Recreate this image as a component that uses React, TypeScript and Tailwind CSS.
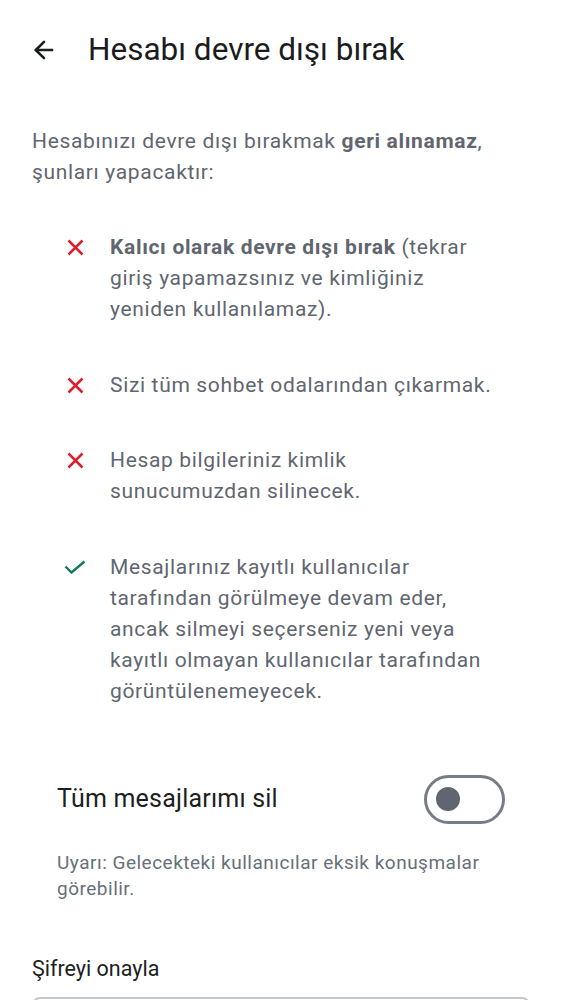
import { ArrowLeft } from 'lucide-react'

const items: { ok: boolean; body: React.ReactNode }[] = [
  {
    ok: false,
    body: (
      <>
        <span className="font-bold">Kalıcı olarak devre dışı bırak</span> (tekrar giriş yapamazsınız ve
        kimliğiniz yeniden kullanılamaz).
      </>
    ),
  },
  { ok: false, body: 'Sizi tüm sohbet odalarından çıkarmak.' },
  { ok: false, body: 'Hesap bilgileriniz kimlik sunucumuzdan silinecek.' },
  {
    ok: true,
    body: 'Mesajlarınız kayıtlı kullanıcılar tarafından görülmeye devam eder, ancak silmeyi seçerseniz yeni veya kayıtlı olmayan kullanıcılar tarafından görüntülenemeyecek.',
  },
]

function CrossIcon() {
  return (
    <svg width="17" height="17" viewBox="0 0 17 17" fill="none">
      <path d="M1.5 1.5L15.5 15.5M15.5 1.5L1.5 15.5" stroke="#dc1f2e" strokeWidth="2.5" />
    </svg>
  )
}

function CheckIcon() {
  return (
    <svg width="22" height="14" viewBox="0 0 22 14" fill="none">
      <path d="M1.5 6.5L7.5 12.5L20.5 1.5" stroke="#0f7a5c" strokeWidth="2.4" />
    </svg>
  )
}

export default function App() {
  return (
    <div className="min-h-screen bg-white px-8 font-['Roboto',sans-serif]">
      <header className="flex h-[99px] items-center">
        <ArrowLeft size={28} strokeWidth={2.2} className="-ml-[2px] text-[#1a1c1e]" />
        <h1 className="ml-[30px] text-[31.5px] text-[#1a1c1e]">Hesabı devre dışı bırak</h1>
      </header>

      <p className="mt-[27px] text-[21px] leading-[31px] tracking-[0.66px] text-[#5f6670]">
        Hesabınızı devre dışı bırakmak <span className="font-bold">geri alınamaz</span>, şunları
        yapacaktır:
      </p>

      <ul className="mx-[27px] mt-[44px] flex flex-col gap-[44.5px]">
        {items.map((item, i) => (
          <li key={i} className="flex gap-[19px]">
            <span className="flex h-[31px] w-8 shrink-0 items-center justify-center">
              {item.ok ? <CheckIcon /> : <CrossIcon />}
            </span>
            <span className="text-[21px] leading-[31px] tracking-[0.66px] text-[#5f6670]">
              {item.body}
            </span>
          </li>
        ))}
      </ul>

      <div className="mx-[25px] mt-[68px] flex items-center justify-between">
        <span className="text-[25px] tracking-[0.2px] text-[#1c1e21]">Tüm mesajlarımı sil</span>
        <span className="flex h-[49px] w-[81px] items-center rounded-full border-[3px] border-[#767d87] px-[9px]">
          <span className="h-[24px] w-[24px] rounded-full bg-[#5f6670]" />
        </span>
      </div>
      <p className="mx-[25px] mt-[26px] text-[19px] leading-[26px] tracking-[0.5px] text-[#667079]">
        Uyarı: Gelecekteki kullanıcılar eksik konuşmalar görebilir.
      </p>

      <div className="mt-[51px] text-[21.5px] leading-[31px] text-[#1c1e21]">Şifreyi onayla</div>
      <div className="mt-[13px] h-[70px] rounded-[8px] border-2 border-[#c3c8ce]" />
    </div>
  )
}
